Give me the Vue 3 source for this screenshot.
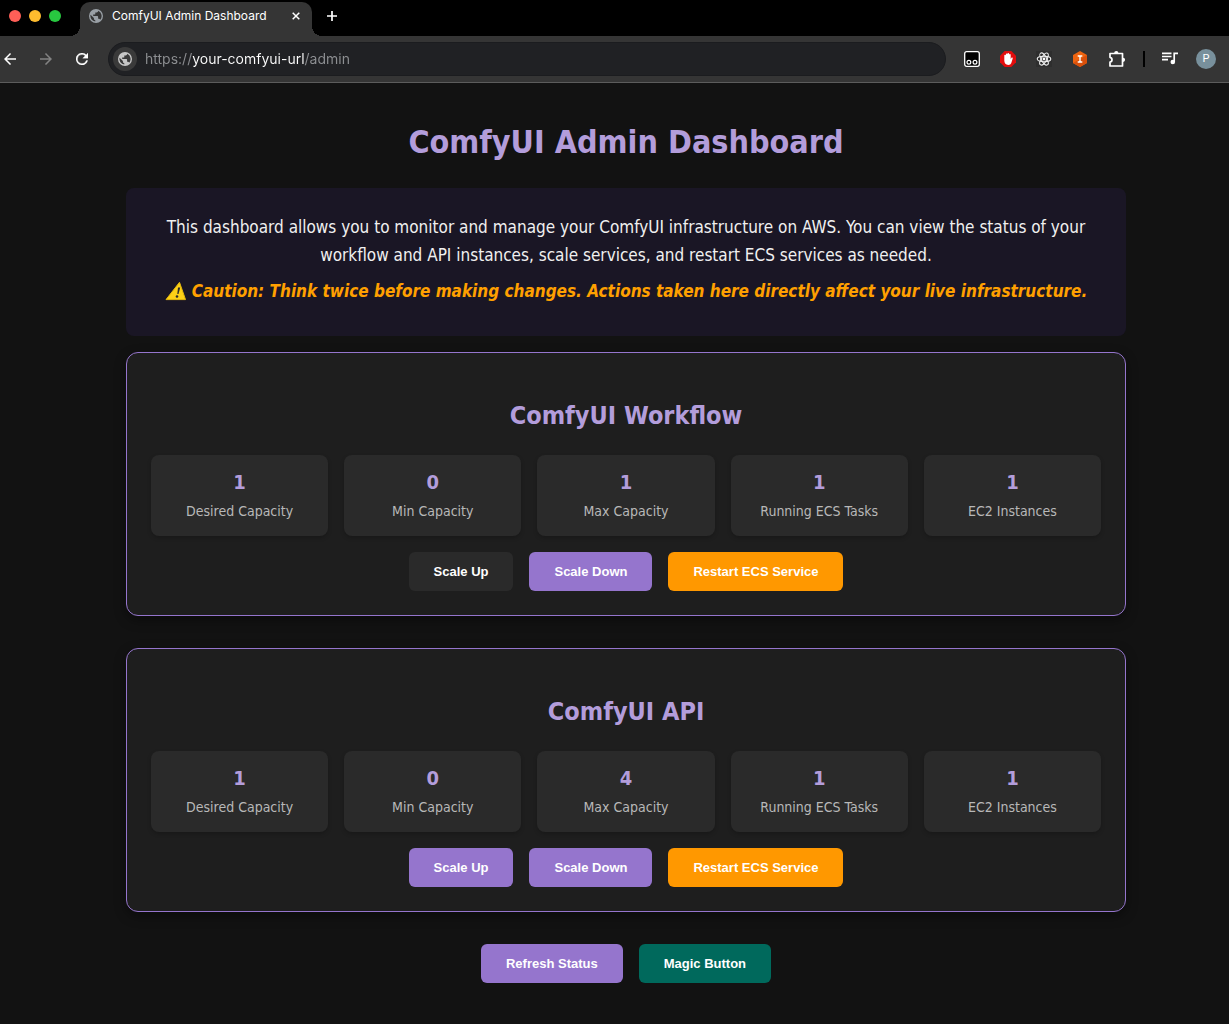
<script setup>
const services = [
  {
    name: 'ComfyUI Workflow',
    scaleUpDisabled: true,
    stats: [
      { value: 1, label: 'Desired Capacity' },
      { value: 0, label: 'Min Capacity' },
      { value: 1, label: 'Max Capacity' },
      { value: 1, label: 'Running ECS Tasks' },
      { value: 1, label: 'EC2 Instances' },
    ],
  },
  {
    name: 'ComfyUI API',
    scaleUpDisabled: false,
    stats: [
      { value: 1, label: 'Desired Capacity' },
      { value: 0, label: 'Min Capacity' },
      { value: 4, label: 'Max Capacity' },
      { value: 1, label: 'Running ECS Tasks' },
      { value: 1, label: 'EC2 Instances' },
    ],
  },
]
const globe =
  'M12 2a10 10 0 1 0 0 20 10 10 0 0 0 0-20zm-1 17.9A8 8 0 0 1 4.2 10.2L9 15v1a2 2 0 0 0 2 2zm6.9-2.5A2 2 0 0 0 16 16h-1v-3a1 1 0 0 0-1-1H8v-2h2a1 1 0 0 0 1-1V7h2a2 2 0 0 0 2-2v-.4a8 8 0 0 1 2.900 12.800z'
</script>

<template>
  <div class="window">
    <header class="browser">
      <div class="tabstrip">
        <div class="lights">
          <button class="light red" aria-label="Close window"></button>
          <button class="light yellow" aria-label="Minimize window"></button>
          <button class="light green" aria-label="Zoom window"></button>
        </div>
        <div class="tab">
          <svg class="tab-icon" viewBox="2 2 20 20" width="14" height="14"><path :d="globe" fill="#9aa0a6" /></svg>
          <span class="tab-title">ComfyUI Admin Dashboard</span>
          <button class="icon-button" aria-label="Close tab">
            <svg viewBox="0 0 8 8" width="8" height="8"><path d="M.7.7l6.600 6.600M7.300.7L.7 7.300" stroke="#fff" stroke-width="1.500" /></svg>
          </button>
        </div>
        <button class="icon-button" aria-label="New tab">
          <svg viewBox="0 0 12 12" width="12" height="12"><path d="M6 1v10M1 6h10" stroke="#fff" stroke-width="1.700" /></svg>
        </button>
      </div>
      <div class="toolbar">
        <nav class="nav">
          <button class="icon-button" aria-label="Back">
            <svg viewBox="4 4 16 16" width="12" height="12"><path d="M20 11H7.800l5.600-5.600L12 4l-8 8 8 8 1.400-1.400L7.800 13H20z" fill="#fff" /></svg>
          </button>
          <button class="icon-button" aria-label="Forward">
            <svg viewBox="4 4 16 16" width="12" height="12"><path d="M12 4l-1.400 1.400 5.600 5.600H4v2h12.200l-5.600 5.600L12 20l8-8z" fill="#838383" /></svg>
          </button>
          <button class="icon-button" aria-label="Reload">
            <svg viewBox="4 4 16 16" width="12" height="12"><path d="M17.650 6.350A8 8 0 1 0 19.730 14h-2.080A6 6 0 1 1 12 6c1.660 0 3.140.690 4.220 1.780L13 11h7V4z" fill="#fff" stroke="#fff" stroke-width=".4" /></svg>
          </button>
        </nav>
        <div class="omnibox">
          <button class="site-info" aria-label="View site information">
            <svg viewBox="2 2 20 20" width="14" height="14"><path :d="globe" fill="#c7c7c7" /></svg>
          </button>
          <input class="url" type="text" aria-label="Address" value="https://your-comfyui-url/admin" />
        </div>
        <div class="extensions">
          <button class="icon-button" aria-label="Tampermonkey">
            <svg viewBox="0 0 16 16" width="16" height="16">
              <rect x=".7" y=".7" width="14.600" height="14.600" rx="2" fill="#000" stroke="#fff" stroke-width="1.300" />
              <circle cx="4.900" cy="11.300" r="1.900" fill="none" stroke="#fff" stroke-width="1.200" />
              <circle cx="11" cy="11.300" r="1.900" fill="none" stroke="#fff" stroke-width="1.200" />
            </svg>
          </button>
          <button class="icon-button" aria-label="Ad blocker">
            <svg viewBox="0 0 16 16" width="16" height="16">
              <path d="M4.700 0h6.600L16 4.700v6.600L11.300 16H4.700L0 11.300V4.700z" fill="#e20d0d" />
              <path d="M4.300 9.500V4.600a.8.8 0 0 1 1.600 0V3.300a.8.8 0 0 1 1.600 0v-.6a.8.8 0 0 1 1.600 0v1a.8.8 0 0 1 1.600 0v4.500l.6-1.200c.5-.8 1.700-.4 1.400.6L11.300 12c-.5 1.200-1.500 1.900-3 1.900C5.700 13.900 4.300 12.200 4.300 9.500z" fill="#fff" />
            </svg>
          </button>
          <button class="icon-button" aria-label="React Developer Tools">
            <svg viewBox="0 0 16 16" width="16" height="16">
              <rect width="16" height="16" fill="#2e2e2e" />
              <g fill="none" stroke="#f0f0f0" stroke-width="1.100">
                <ellipse cx="8" cy="8" rx="6.800" ry="2.700" />
                <ellipse cx="8" cy="8" rx="6.800" ry="2.700" transform="rotate(60 8 8)" />
                <ellipse cx="8" cy="8" rx="6.800" ry="2.700" transform="rotate(120 8 8)" />
              </g>
              <circle cx="8" cy="8" r="1.400" fill="#fff" />
            </svg>
          </button>
          <button class="icon-button" aria-label="Inspector">
            <svg viewBox="0 0 16 16" width="16" height="16">
              <path d="M8 0l7 4v8l-7 4-7-4V4z" fill="#ee6410" />
              <path d="M8 8l7-4v8l-7 4-7-4z" fill="#d9500b" />
              <path d="M5.700 5h4.600M5.700 11h4.600M8 5v6" stroke="#fff" stroke-width="1.400" />
            </svg>
          </button>
          <button class="icon-button" aria-label="Extensions">
            <svg viewBox="0 0 18 18" width="18" height="18">
              <path d="M2 3.500h12.500v12.500H2v-3.800a2.500 2.500 0 0 0 0-4.900z" fill="none" stroke="#fff" stroke-width="1.700" stroke-linejoin="round" />
              <path d="M6.200 3a2.100 2.100 0 0 1 4.200 0zM15 7.700a2.100 2.100 0 0 1 0 4.200z" fill="#fff" />
            </svg>
          </button>
          <span class="divider"></span>
          <button class="icon-button" aria-label="Media controls">
            <svg viewBox="0 0 16 14" width="16" height="14">
              <path d="M0 1.300h9.500M0 4.500h9.500M0 7.700h6" stroke="#fff" stroke-width="1.700" />
              <path d="M12.200 10V1.300H16" fill="none" stroke="#fff" stroke-width="1.700" />
              <circle cx="10.800" cy="10" r="2.300" fill="#fff" />
            </svg>
          </button>
          <button class="avatar" aria-label="Profile">P</button>
        </div>
      </div>
    </header>

    <main class="page">
      <h1>ComfyUI Admin Dashboard</h1>
      <section class="intro">
        <p>
          This dashboard allows you to monitor and manage your ComfyUI infrastructure on AWS. You can view the status of your
          workflow and API instances, scale services, and restart ECS services as needed.
        </p>
        <p class="caution">
          <svg viewBox="0 0 22 20" width="22" height="20" role="img" aria-label="Warning">
            <path d="M14.500 1.300L20.500 18.600H1z" fill="#fdd017" stroke="#e5b80b" stroke-linejoin="round" />
            <path d="M13 6.500h2.200l-1.700 6.500h-1.200z" fill="#2b2b2b" />
            <circle cx="12" cy="15.500" r="1.300" fill="#2b2b2b" />
          </svg>
          Caution: Think twice before making changes. Actions taken here directly affect your live infrastructure.
        </p>
      </section>

      <section v-for="service in services" :key="service.name" class="card">
        <h2>{{ service.name }}</h2>
        <div class="stats">
          <div v-for="stat in service.stats" :key="stat.label" class="stat">
            <strong>{{ stat.value }}</strong>
            <span>{{ stat.label }}</span>
          </div>
        </div>
        <div class="actions">
          <button class="button" :disabled="service.scaleUpDisabled">Scale Up</button>
          <button class="button">Scale Down</button>
          <button class="button restart">Restart ECS Service</button>
        </div>
      </section>

      <div class="actions">
        <button class="button">Refresh Status</button>
        <button class="button magic">Magic Button</button>
      </div>
    </main>
  </div>
</template>

<style>
body {
  margin: 0;
  background: #121212;
}
</style>

<style scoped>
* {
  box-sizing: border-box;
}
button {
  border: 0;
  padding: 0;
  cursor: pointer;
}
svg {
  display: block;
  flex: none;
}
.window {
  min-height: 100vh;
  background: #121212;
  font-family: "DejaVu Sans Condensed", Tahoma, sans-serif;
}
.browser {
  font-family: Inter, Roboto, sans-serif;
  border-bottom: 1px solid #5c5c5c;
}
.icon-button {
  display: flex;
  background: none;
}
.tabstrip {
  display: flex;
  align-items: center;
  height: 36px;
  padding-left: 9px;
  background: #000;
}
.lights {
  display: flex;
  gap: 8px;
  margin-right: 19px;
  padding-bottom: 4px;
}
.light {
  width: 12px;
  height: 12px;
  border-radius: 50%;
}
.red {
  background: #ff5f57;
}
.yellow {
  background: #febc2e;
}
.green {
  background: #28c840;
}
.tab {
  position: relative;
  display: flex;
  align-items: center;
  align-self: flex-end;
  width: 232px;
  height: 34px;
  margin-right: 14px;
  padding: 0 12px 6px 9px;
  border-radius: 10px 10px 0 0;
  background: #353535;
}
.tab::before,
.tab::after {
  content: "";
  position: absolute;
  bottom: 0;
  width: 10px;
  height: 10px;
}
.tab::before {
  right: 100%;
  background: radial-gradient(circle at 0 0, #000 10px, #353535 10px);
}
.tab::after {
  left: 100%;
  background: radial-gradient(circle at 100% 0, #000 10px, #353535 10px);
}
.tab-title {
  flex: 1;
  margin-left: 9px;
  color: #fff;
  font-size: 12px;
  line-height: 16px;
  white-space: nowrap;
}
.tabstrip > .icon-button {
  padding-bottom: 4px;
}
.toolbar {
  display: flex;
  align-items: center;
  height: 46px;
  padding: 0 13px 0 4px;
  background: #353535;
}
.nav {
  display: flex;
  gap: 24px;
  margin-right: 20px;
}
.omnibox {
  display: flex;
  flex: 1;
  align-items: center;
  height: 34px;
  padding-left: 4px;
  border: 1px solid #1b1c1f;
  border-radius: 17px;
  background: #202124;
}
.site-info {
  display: flex;
  align-items: center;
  justify-content: center;
  width: 24px;
  height: 24px;
  margin-right: 8px;
  border-radius: 50%;
  background: #3a3a3a;
}
.url {
  flex: 1;
  min-width: 0;
  padding: 0;
  border: 0;
  outline: 0;
  font: 14px/20px Inter, sans-serif;
  color: transparent;
  background: linear-gradient(90deg, #8d8f92 47px, #fff 47px, #fff 160px, #8d8f92 160px);
  background-clip: text;
}
.extensions {
  display: flex;
  align-items: center;
  gap: 20px;
  margin-left: 18px;
}
.divider {
  width: 2px;
  height: 16px;
  margin: 0 -3px;
  background: #000;
}
.avatar {
  width: 20px;
  height: 20px;
  margin-left: -2px;
  border-radius: 50%;
  background: #78909c;
  color: #fff;
  font: 11px/20px Roboto, sans-serif;
}
.page {
  display: flex;
  flex-direction: column;
  gap: 32px;
  max-width: 1023px;
  margin: 0 auto;
  padding: 35px 0 42px 23px;
  text-align: center;
}
h1,
h2 {
  margin: 0;
  color: #b39ddb;
  font-weight: bold;
}
h1 {
  margin-bottom: -10px;
  font-size: 32px;
  line-height: 48px;
}
.intro {
  margin-bottom: -16px;
  padding: 25px 24px 31px;
  border-radius: 8px;
  background: #1a1625;
  color: #f0f0f0;
  font-size: 17px;
  line-height: 28px;
}
.intro p {
  margin: 0;
}
.intro .caution {
  display: flex;
  align-items: center;
  justify-content: center;
  gap: 5px;
  margin-top: 8px;
  color: #ffa000;
  font-style: italic;
  font-weight: bold;
}
.card {
  padding: 24px;
  border: 1px solid #9575cd;
  border-radius: 12px;
  background: #1e1e1e;
  box-shadow: 0 4px 12px rgba(0, 0, 0, 0.4);
}
h2 {
  margin: 19px 0;
  font-size: 25px;
  line-height: 40px;
}
.stats {
  display: grid;
  grid-template-columns: repeat(5, 1fr);
  gap: 16px;
  margin-bottom: 16px;
}
.stat {
  display: flex;
  flex-direction: column;
  gap: 8px;
  padding: 16px 8px 15px;
  border-radius: 8px;
  background: #2a2a2a;
  box-shadow: 0 2px 4px rgba(0, 0, 0, 0.2);
}
.stat strong {
  color: #b39ddb;
  font-size: 20px;
  line-height: 22px;
}
.stat span {
  color: #b8b8b8;
  font-size: 14px;
  line-height: 20px;
}
.actions {
  display: flex;
  justify-content: center;
  gap: 16px;
}
.button {
  padding: 12px 25px;
  border-radius: 6px;
  background: #9575cd;
  color: #fff;
  font: bold 13px/15px "Liberation Sans", Arial, sans-serif;
}
.button:disabled {
  background: #2a2a2a;
  cursor: default;
}
.restart {
  background: #ff9800;
}
.magic {
  background: #00695c;
}
</style>
